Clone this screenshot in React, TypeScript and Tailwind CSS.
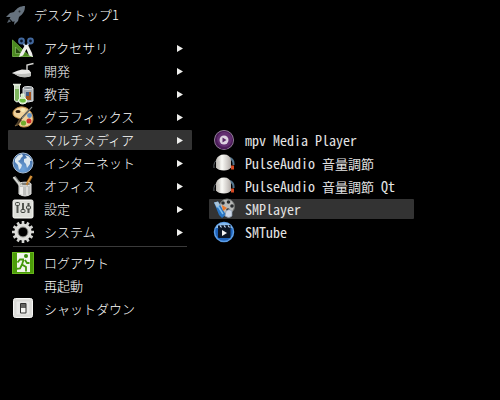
import React from 'react';

type MenuEntry = {
  label: React.ReactNode;
  icon?: React.ReactNode;
  active?: boolean;
};

const Svg: React.FC<{ children: React.ReactNode }> = ({ children }) => (
  <svg viewBox="0 0 22 22" className="h-[22px] w-[22px] shrink-0" aria-hidden="true">
    {children}
  </svg>
);

const RocketIcon = () => (
  <svg viewBox="0 0 20 20" className="h-5 w-5 shrink-0" aria-hidden="true">
    <path
      d="M19 1C14 1 11 3 8 7L4 8L0 12L4.500 12L3.500 13.500L7 17L8.500 16L8 20L12 16L13 12C17 9 19 6 19 1Z"
      fill="#66727e"
    />
    <path d="M3 14L1 18L5 16.500Z" fill="#55606b" />
    <circle cx="13.500" cy="6.500" r="1" fill="#2a3138" />
  </svg>
);

const AccessoriesIcon = () => (
  <Svg>
    <path d="M.5 3L18 19.500H.5Z" fill="#4b8a20" stroke="#5f9a35" />
    <path d="M3.500 10L10 16.500H3.500Z" fill="#24480f" stroke="#8abb66" strokeWidth=".7" />
    <path d="M1 19.500H21" stroke="#6ba043" />
    <path d="M11 6L14 10M17 6L14 10" stroke="#9db4d6" strokeWidth="2" />
    <path d="M13 8L8 17L7 20L11 18.500L14.500 12L17 18.500L21 20L20 16L16 8Z" fill="#f0f0ed" />
    <circle cx="9.500" cy="4" r="2.400" fill="#071329" stroke="#43699f" strokeWidth="2" />
    <circle cx="18.500" cy="4" r="2.400" fill="#071329" stroke="#43699f" strokeWidth="2" />
  </Svg>
);

const DevelopmentIcon = () => (
  <Svg>
    <path d="M15 12V5L21.500 3.500" fill="none" stroke="#d6d6d3" strokeWidth="1.400" />
    <path d="M0 13Q6 10 10 9.500L17 10L19 12.500L19 16Q13 18.500 6 16Q4 14.500 0 13Z" fill="#e9e9e7" />
    <path d="M0 13Q9 15 19 13L19 16Q13 18.500 6 16Q4 14.500 0 13Z" fill="#bcbdba" />
  </Svg>
);

const EducationIcon = () => (
  <Svg>
    <path d="M11 5H21V18Q16 20 11 18Z" fill="#a8afb4" stroke="#dddfe0" />
    <ellipse cx="16" cy="5" rx="5" ry="1.500" fill="#878e94" stroke="#e0e2e3" />
    <rect x="14" y="9" width="5" height="8" fill="#a4521b" />
    <rect x="14" y="9" width="3" height="4" fill="#415982" />
    <path d="M2.500 2H7.500V17Q5 21 2.500 17Z" fill="#c5d9bb" stroke="#e3eee0" />
    <path d="M3 6H7V17Q5 19 3 17Z" fill="#7cb45d" />
    <path d="M1 1.500H9" stroke="#e0e8dc" strokeWidth="1.500" />
    <path d="M9 11H12V14L15 17Q15 21 11 21Q6.500 21 6.500 17L9 14Z" fill="#d0ebc0" stroke="#edf8e6" />
    <path d="M8 16H13L14 18Q11 21 7.500 18Z" fill="#6dbd3f" />
  </Svg>
);

const GraphicsIcon = () => (
  <Svg>
    <path
      d="M8 1C14 0 21 5 21 13C21 18 17 21 12 21C6 21 6 17 8 15C10 12 5 13 2 10C-1 6 3 2 8 1Z"
      fill="#f0d29c"
      stroke="#c08a41"
    />
    <ellipse cx="6" cy="5.500" rx="2.500" ry="1.500" fill="#251608" />
    <circle cx="11" cy="4" r="2" fill="#f7ebb7" />
    <circle cx="17.500" cy="9.500" r="2.400" fill="#5f91c6" />
    <circle cx="17" cy="15" r="2.500" fill="#cf312d" />
    <circle cx="11.500" cy="17" r="2.600" fill="#72ad2c" />
    <path d="M20 1L8 14" stroke="#3b3d3b" strokeWidth="1.800" />
    <path d="M20 1L10 12" stroke="#a6aba8" strokeWidth=".7" />
    <path d="M8 12L10 14L6 19L3 20Q6 17 8 12" fill="#443421" stroke="#ab8c5a" strokeWidth=".5" />
  </Svg>
);

const InternetIcon = () => (
  <Svg>
    <defs>
      <radialGradient id="globe" cx="50%" cy="80%" r="80%">
        <stop offset="0" stopColor="#6fa3da" />
        <stop offset="1" stopColor="#3a659f" />
      </radialGradient>
    </defs>
    <circle cx="11" cy="11" r="10" fill="url(#globe)" stroke="#a7bdd5" />
    <path d="M3 7L6 3.500L10 2L11 4L9 6L8 8L6 9L8 11L10 13L9 16L7 18L6 13L3 10Z" fill="#dce7ef" />
    <path d="M13 3L17 4.500L20 8.500L18 9L18 12L15 16L14 12L12 10L12 7L15 6Z" fill="#dce7ef" />
  </Svg>
);

const OfficeIcon = () => (
  <Svg>
    <path d="M2 2L9 11" stroke="#858985" strokeWidth="3.600" />
    <path d="M1.500 2L8 10" stroke="#dddeda" strokeWidth="1.600" />
    <path d="M19.500 1L14 11" stroke="#9a611b" strokeWidth="3" />
    <path d="M19.500 1L14 10" stroke="#e7a447" strokeWidth="1.400" />
    <path d="M7 9V19Q13 23 19 19V9Z" fill="#bfc0bd" stroke="#e4e4e2" />
    <path d="M8 12H11V20L8 19Z" fill="#eeeeeb" />
    <path d="M14 12H16V20H14Z" fill="#dcdcd9" />
    <ellipse cx="13" cy="9" rx="6" ry="1.800" fill="#7a7c79" stroke="#e8e8e5" />
    <path d="M7 7L10 10" stroke="#c8c8bd" strokeWidth="1.500" />
    <path d="M16 7L14.500 10" stroke="#b9792c" strokeWidth="2" />
  </Svg>
);

const SettingsIcon = () => (
  <Svg>
    <rect x="1" y="2" width="20" height="18" rx="1.500" fill="#dedfda" stroke="#fafaf7" />
    <path d="M5.500 5V15M11 5V15M16.500 5V15" stroke="#525550" strokeWidth="2" />
    <rect x="3.500" y="4.500" width="4" height="3" rx="1" fill="#d6d7d2" stroke="#3e423d" />
    <rect x="9" y="11.500" width="4" height="3" rx="1" fill="#d6d7d2" stroke="#3e423d" />
    <rect x="14.500" y="8" width="4" height="3" rx="1" fill="#d6d7d2" stroke="#3e423d" />
  </Svg>
);

const SystemIcon = () => (
  <Svg>
    <g stroke="#d2d3d0" strokeWidth="2.600">
      <path d="M11 0V22M0 11H22" />
      <path d="M5.500 1.500L16.500 20.500M16.500 1.500L5.500 20.500" />
      <path d="M1.500 5.500L20.500 16.500M20.500 5.500L1.500 16.500" />
    </g>
    <circle cx="11" cy="11" r="6.800" fill="none" stroke="#dededb" strokeWidth="3.600" />
    <circle cx="11" cy="11" r="5" fill="#000000" stroke="#9a9b97" />
  </Svg>
);

const LogoutIcon = () => (
  <Svg>
    <rect x=".5" y=".5" width="21" height="21" fill="#4c9d09" stroke="#67b51b" />
    <path d="M5 1H18V20H5Z" fill="#f2f5eb" />
    <circle cx="14" cy="4" r="2" fill="#398b09" />
    <path
      d="M12 7.500L8 7.500L5.500 10.500M11.500 8L10 12.500L14 15L14 19.500M10 12.500L8 16.500L3 17M13 8L15 11L17.500 11"
      fill="none"
      stroke="#459809"
      strokeWidth="1.800"
    />
  </Svg>
);

const ShutdownIcon = () => (
  <Svg>
    <rect x="1.500" y=".5" width="19" height="19" rx="2" fill="#dededb" stroke="#f7f7f5" />
    <rect x="4" y="3" width="14" height="14" rx="1" fill="#e9e9e7" stroke="#d2d2cf" strokeWidth=".6" />
    <rect x="8" y="5" width="6.500" height="10.500" rx="1" fill="#30302f" />
    <path d="M9 6H13.500V10H9Z" fill="#656563" />
    <path d="M9 10H13.500V14.500H9Z" fill="#f5f5f2" />
  </Svg>
);

const MpvIcon = () => (
  <Svg>
    <circle cx="11" cy="11" r="10" fill="#9c8ba2" />
    <circle cx="11" cy="11" r="9.200" fill="#4b1c58" />
    <circle cx="11.500" cy="10.500" r="7.500" fill="#632f71" />
    <circle cx="11" cy="11" r="4.500" fill="#ded3e1" />
    <path d="M9.500 8.500L13.500 11L9.500 13.500Z" fill="#5a2867" />
  </Svg>
);

const VolumeIcon = () => (
  <Svg>
    <defs>
      <linearGradient id="knob">
        <stop offset="0" stopColor="#bab6b1" />
        <stop offset=".4" stopColor="#fafaf6" />
        <stop offset="1" stopColor="#b4aeaa" />
      </linearGradient>
    </defs>
    <path d="M1 16Q0 10 5 7" fill="none" stroke="#5e6368" />
    <path d="M17 6Q21 8 20.500 13" fill="none" stroke="#52748c" strokeWidth="2" />
    <path d="M3 8Q5 2.500 11 2.500Q17 2.500 18 8V15.500Q16 18.500 11 18.500Q5 18.500 3 15.500Z" fill="url(#knob)" />
    <path d="M6 9V17" stroke="#c9c5c0" strokeWidth=".8" />
    <rect x="18" y="13.500" width="3" height="4" fill="#d64a23" />
  </Svg>
);

const SmPlayerIcon = () => (
  <Svg>
    <circle cx="14" cy="8.500" r="7.500" fill="#b9bab8" stroke="#6f726f" />
    <circle cx="10" cy="5" r="1.800" fill="#292c2d" />
    <circle cx="15.500" cy="4" r="1.800" fill="#292c2d" />
    <circle cx="19" cy="8" r="1.800" fill="#292c2d" />
    <circle cx="15" cy="12" r="1.800" fill="#292c2d" />
    <path d="M1 4.500L5 3.500L13 17L9 20L6 17Z" fill="#2773c2" />
    <path d="M1 4.500L5 3.500L7 7L4 10Z" fill="#aac4d8" />
    <path d="M5 8L10 16" stroke="#7fc0ef" strokeWidth="1.500" />
    <path d="M9 7L14 10L10 13Z" fill="#ed7829" />
    <path d="M13 13Q16 10 19 13L19 18Q16 21 12 18Z" fill="#cdd7e6" stroke="#8597ab" strokeWidth=".7" />
  </Svg>
);

const SmTubeIcon = () => (
  <Svg>
    <circle cx="11" cy="11" r="9.500" fill="#1d62bb" stroke="#5b9de6" strokeWidth="1.500" />
    <path d="M3 7Q4 2 11 2Q18 2 19 7Z" fill="#8abdf0" />
    <rect x="5" y="7" width="12.500" height="10" rx="1" fill="#0b1424" />
    <path d="M5 7V4.500L17.500 4V8Z" fill="#0b1424" />
    <path d="M7 4.500L8.500 6.500M11 4.500L12.500 6.500M15 4.500L16.500 6.500" stroke="#cce2fa" strokeWidth="1.200" />
    <path d="M9 9L14 12L9 15Z" fill="#f4f4f4" />
  </Svg>
);

const categories: MenuEntry[] = [
  { label: 'アクセサリ', icon: <AccessoriesIcon /> },
  { label: '開発', icon: <DevelopmentIcon /> },
  { label: '教育', icon: <EducationIcon /> },
  { label: 'グラフィックス', icon: <GraphicsIcon /> },
  { label: 'マルチメディア', active: true },
  { label: 'インターネット', icon: <InternetIcon /> },
  { label: 'オフィス', icon: <OfficeIcon /> },
  { label: '設定', icon: <SettingsIcon /> },
  { label: 'システム', icon: <SystemIcon /> },
];

const sessionItems: MenuEntry[] = [
  { label: 'ログアウト', icon: <LogoutIcon /> },
  { label: '再起動' },
  { label: 'シャットダウン', icon: <ShutdownIcon /> },
];

const Ja: React.FC<{ children: string }> = ({ children }) => (
  <span className="font-['Noto_Sans_CJK_JP',sans-serif] text-[13px]">{children}</span>
);

const players: MenuEntry[] = [
  { label: 'mpv Media Player', icon: <MpvIcon /> },
  { label: <>PulseAudio <Ja>音量調節</Ja></>, icon: <VolumeIcon /> },
  { label: <>PulseAudio <Ja>音量調節</Ja> Qt</>, icon: <VolumeIcon /> },
  { label: 'SMPlayer', icon: <SmPlayerIcon />, active: true },
  { label: 'SMTube', icon: <SmTubeIcon /> },
];

const MenuRow: React.FC<{ entry: MenuEntry; hasSubmenu?: boolean }> = ({ entry, hasSubmenu }) => (
  <button
    type="button"
    className={`flex h-5 w-full items-center rounded-[1px] pl-1 text-left ${entry.active ? 'bg-[#333333]' : ''}`}
  >
    <span className="flex w-8 shrink-0 items-center">{entry.icon}</span>
    <span className="grow whitespace-pre leading-5">{entry.label}</span>
    {hasSubmenu && (
      <svg viewBox="0 0 6 7" className="mr-[9px] h-[7px] w-[6px] shrink-0" aria-hidden="true">
        <path d="M0 0L6 3.500L0 7Z" fill="#eeeeec" />
      </svg>
    )}
  </button>
);

const App: React.FC = () => {
  return (
    <main
      lang="ja"
      className="min-h-screen bg-black pt-[5px] font-['Noto_Sans_CJK_JP',sans-serif] text-[13px] font-light text-white"
    >
      <header className="flex h-5 items-center gap-2 pl-1.5">
        <RocketIcon />
        <h1 className="leading-5 font-light">デスクトップ1</h1>
      </header>

      <div className="mt-[13px] flex items-start gap-[17px] pl-2">
        <nav className="flex w-[184px] flex-col gap-[3px]" aria-label="デスクトップ">
          {categories.map((entry, i) => (
            <MenuRow key={i} entry={entry} hasSubmenu />
          ))}
          <hr className="mx-[5px] mt-px mb-[3px] border-[#3a3a3a]" />
          {sessionItems.map((entry, i) => (
            <MenuRow key={i} entry={entry} />
          ))}
        </nav>

        <nav
          className="mt-[92px] flex w-[205px] flex-col gap-[3px] font-['Noto_Sans_Mono_CJK_JP','Liberation_Mono',monospace] text-sm font-normal text-[#e4e4e4]"
          aria-label="マルチメディア"
        >
          {players.map((entry, i) => (
            <MenuRow key={i} entry={entry} />
          ))}
        </nav>
      </div>
    </main>
  );
};

export default App;
